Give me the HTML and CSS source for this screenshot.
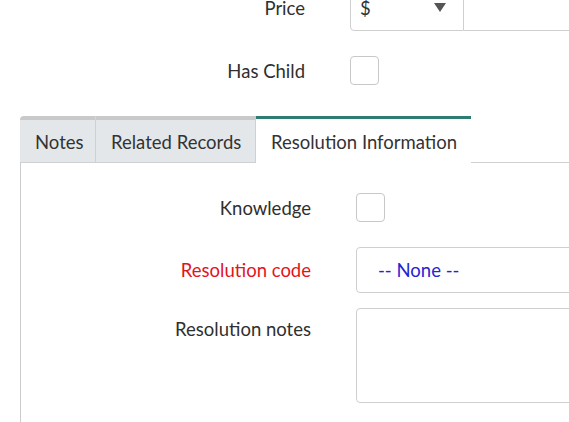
FILE: index.html
```html
<!DOCTYPE html>
<html lang="en">
<head>
<meta charset="utf-8">
<title>Form</title>
<link rel="stylesheet" href="styles.css">
</head>
<body>
<div class="page">
  <div class="form-top">
    <div class="label price-label">Price</div>
    <div class="price-field">
      <div class="currency">
        <span class="currency-symbol">$</span>
        <svg class="caret" width="12" height="10" viewBox="0 0 12 10"><polygon points="0,0 12,0 6,9" fill="#555"/></svg>
      </div>
      <div class="amount"></div>
    </div>
    <div class="label">Has Child</div>
    <div class="field"><span class="checkbox"></span></div>
  </div>

  <div class="tabs-section">
    <div class="tablist">
      <div class="tab tab-first">Notes</div>
      <div class="tab tab-related">Related Records</div>
      <div class="tab tab-active">Resolution Information</div>
      <div class="tab-filler"></div>
    </div>
    <div class="panel">
      <div class="panel-row row-knowledge">
        <div class="label">Knowledge</div>
        <div class="field"><span class="checkbox"></span></div>
      </div>
      <div class="panel-row row-code">
        <div class="label mandatory">Resolution code</div>
        <div class="field"><div class="select-box">-- None --</div></div>
      </div>
      <div class="panel-row row-notes">
        <div class="label label-top">Resolution notes</div>
        <div class="field"><div class="textarea"></div></div>
      </div>
    </div>
  </div>
</div>
</body>
</html>
```
FILE: styles.css
```css
html, body {
  margin: 0;
  padding: 0;
  overflow: hidden;
  background: #fff;
}
body {
  font-family: Lato, "Liberation Sans", sans-serif;
  font-size: 18.5px;
  color: #333;
  width: 569px;
  height: 422px;
}
.page {
  margin-top: -15px;
  width: 569px;
  overflow: hidden;
}
.form-top {
  display: grid;
  grid-template-columns: 305px 500px;
  column-gap: 45px;
  row-gap: 25px;
  align-items: center;
}
.label {
  text-align: right;
  line-height: 22px;
  color: #2f2f2f;
  white-space: nowrap;
}
.price-field {
  display: flex;
  height: 46px;
}
.currency {
  box-sizing: border-box;
  width: 114px;
  height: 46px;
  border: 1px solid #cfcfcf;
  border-radius: 4px 0 0 4px;
  display: flex;
  align-items: center;
  justify-content: space-between;
  padding: 0 17px 0 9px;
}
.currency-symbol {
  color: #333;
}
.amount {
  box-sizing: border-box;
  flex: 1;
  height: 46px;
  border: 1px solid #cfcfcf;
  border-left: none;
}
.field {
  display: flex;
  align-items: center;
}
.checkbox {
  display: block;
  box-sizing: border-box;
  width: 29px;
  height: 29px;
  border: 1px solid #c8c8c8;
  border-radius: 4px;
  background: #fff;
}
.tabs-section {
  margin-top: 31px;
  margin-left: 20px;
}
.tablist {
  display: flex;
  height: 47px;
}
.tab {
  box-sizing: border-box;
  flex: none;
  height: 47px;
  padding: 2px 0 0 15px;
  background: #e4e7ea;
  border-top: 4px solid #c9c9c9;
  border-bottom: 1px solid #d0d0d0;
  border-right: 1px solid #d0d0d0;
  display: flex;
  align-items: center;
  color: #333;
  white-space: nowrap;
}
.tab-first {
  border-top-left-radius: 4px;
  width: 76px;
}
.tab-related {
  width: 160px;
}
.tab-active {
  background: #fff;
  border-top: 3px solid #2f7d71;
  border-bottom: 1px solid #fff;
  border-right: none;
  width: 215px;
  padding-top: 3px;
}
.tab-filler {
  flex: 1;
  border-bottom: 1px solid #d0d0d0;
}
.panel {
  border-left: 1px solid #cccccc;
  padding-top: 30px;
  height: 400px;
}
.panel-row {
  display: grid;
  grid-template-columns: 290px 500px;
  column-gap: 45px;
  align-items: center;
}
.row-code {
  margin-top: 25px;
}
.row-notes {
  margin-top: 15px;
  align-items: start;
}
.label-top {
  padding-top: 10px;
}
.mandatory {
  color: #e3141c;
}
.select-box {
  box-sizing: border-box;
  width: 500px;
  height: 46px;
  border: 1px solid #cfcfcf;
  border-radius: 4px;
  display: flex;
  align-items: center;
  padding-left: 21px;
  color: #2424d0;
}
.textarea {
  box-sizing: border-box;
  width: 500px;
  height: 95px;
  border: 1px solid #cfcfcf;
  border-radius: 4px;
}
```
